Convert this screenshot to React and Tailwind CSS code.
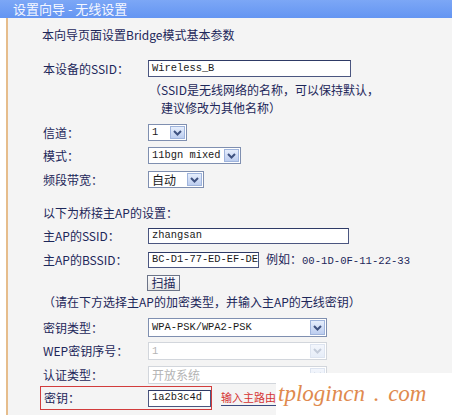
import React from "react";

const cjk = { fontFamily: '"Noto Sans CJK SC", "Liberation Sans", sans-serif' };
const mono = { fontFamily: '"Liberation Mono", "Noto Sans CJK SC", monospace' };

function Arrow({ disabled }) {
  return (
    <div
      className={
        disabled
          ? "ml-auto mr-[1px] w-[15px] shrink-0 h-[calc(100%-2px)] border border-[#dde4f0] bg-gradient-to-b from-[#f3f6fc] to-[#e6edf8] flex items-center justify-center"
          : "ml-auto mr-[1px] w-[15px] shrink-0 h-[calc(100%-2px)] border border-[#9fb4dc] bg-gradient-to-b from-[#e6eefc] to-[#bccdef] flex items-center justify-center"
      }
    >
      <svg width="9" height="6" viewBox="0 0 9 6">
        <path d="M1 1 L4.5 4.5 L8 1" fill="none" stroke={disabled ? "#c3cbd9" : "#3f5280"} strokeWidth="2" />
      </svg>
    </div>
  );
}

function Select({ className, text, disabled, font }) {
  return (
    <div
      className={
        "flex items-center bg-white border pl-[3px] text-[10.4px] whitespace-nowrap " +
        (disabled ? "border-[#d2d6dc] text-[#b4b4b4] " : "border-[#7f8fb0] text-[#1a1a1a] ") +
        className
      }
      style={font || mono}
    >
      <span className="leading-none">{text}</span>
      <Arrow disabled={disabled} />
    </div>
  );
}

function Box({ className, children }) {
  return (
    <div
      className={"flex items-center bg-white border border-[#4b5680] border-t-[#2e3a66] pl-[3px] text-[10.4px] text-[#1a1a1a] whitespace-nowrap " + className}
      style={mono}
    >
      {children}
    </div>
  );
}

function Label({ children }) {
  return <div className="w-[105px] shrink-0 ml-[1px]">{children}</div>;
}

export default function App() {
  return (
    <div className="w-[452px] h-[415px] overflow-hidden bg-white relative text-[12px] text-[#1d275a]" style={cjk}>
      <div className="h-[18px] bg-gradient-to-b from-[#7ca7f6] to-[#6495f2] pl-[13px] text-[13px] leading-[18px] text-[#f4f7ff] whitespace-pre">
        设置向导 - 无线设置
      </div>
      <div className="flex h-[397px]">
        <div className="w-[6px] bg-white" />
        <div className="flex-1 border-l-2 border-[#e6bd8c] bg-[#f4f4f4] pl-[34px] flex flex-col">
          <div className="mt-[9px] h-[16px] leading-[16px]">本向导页面设置Bridge模式基本参数</div>

          <div className="mt-[17px] h-[17px] flex items-center">
            <Label>本设备的SSID：</Label>
            <Box className="w-[203px] h-[17px]">Wireless_B</Box>
          </div>

          <div className="mt-[4px] pl-[107px] leading-[18px]">
            <div>（SSID是无线网络的名称，可以保持默认，</div>
            <div className="pl-[12px]">建议修改为其他名称）</div>
          </div>

          <div className="mt-[7px] h-[17px] flex items-center">
            <Label>信道：</Label>
            <Select className="w-[39px] h-[17px]" text="1" />
          </div>

          <div className="mt-[6px] h-[17px] flex items-center">
            <Label>模式：</Label>
            <Select className="w-[93px] h-[17px]" text="11bgn mixed" />
          </div>

          <div className="mt-[7px] h-[17px] flex items-center">
            <Label>频段带宽：</Label>
            <Select className="w-[56px] h-[17px] text-[12px]" text="自动" font={cjk} />
          </div>

          <div className="mt-[17px] h-[16px] leading-[16px] ml-[1px]">以下为桥接主AP的设置：</div>

          <div className="mt-[7px] h-[16px] flex items-center">
            <Label>主AP的SSID：</Label>
            <Box className="w-[201px] h-[16px]">zhangsan</Box>
          </div>

          <div className="mt-[8px] h-[16px] flex items-center">
            <Label>主AP的BSSID：</Label>
            <Box className="w-[111px] h-[16px]">BC-D1-77-ED-EF-DE</Box>
            <span className="ml-[7px] whitespace-nowrap">
              例如：<span className="text-[10.6px]" style={mono}>00-1D-0F-11-22-33</span>
            </span>
          </div>

          <div className="mt-[7px] h-[16px] flex items-center">
            <Label />
            <button className="h-[16px] w-[33px] -ml-[1px] border border-[#6c7488] bg-gradient-to-b from-[#fbfbfb] to-[#e4e4e4] text-[12px] leading-none text-[#1d275a] flex items-center justify-center">
              扫描
            </button>
          </div>

          <div className="mt-[3px] h-[16px] leading-[16px] ml-[1px]">（请在下方选择主AP的加密类型，并输入主AP的无线密钥）</div>

          <div className="mt-[8px] h-[19px] flex items-center">
            <Label>密钥类型：</Label>
            <Select className="w-[179px] h-[19px]" text="WPA-PSK/WPA2-PSK" />
          </div>

          <div className="mt-[5px] h-[18px] flex items-center">
            <Label>WEP密钥序号：</Label>
            <Select className="w-[179px] h-[18px]" text="1" disabled />
          </div>

          <div className="mt-[6px] h-[18px] flex items-center">
            <Label>认证类型：</Label>
            <Select className="w-[179px] h-[18px] text-[12px]" text="开放系统" disabled font={cjk} />
          </div>

          <div className="mt-[2px] h-[24px] flex items-center">
            <div className="-ml-[2px] pl-[2px] w-[172px] h-[24px] border border-[#d23c3c] flex items-center">
              <Label>密钥：</Label>
              <Box className="w-[63px] h-[17px] -ml-[1px]">1a2b3c4d</Box>
            </div>
            <div className="ml-[9px] whitespace-nowrap text-[11px] text-[#d43333] border-b border-[#3a4a80] leading-[15px]">
              输入主路由
            </div>
          </div>
        </div>
      </div>

      <div className="absolute left-[276px] top-[373px] w-[176px] h-[42px] bg-white">
        <span
          className="absolute left-[2px] top-[4px] text-[23px] italic text-[#e08a4e] whitespace-nowrap"
          style={{ fontFamily: '"Liberation Serif", serif', wordSpacing: "3px" }}
        >
          tplogincn . com
        </span>
      </div>
    </div>
  );
}
